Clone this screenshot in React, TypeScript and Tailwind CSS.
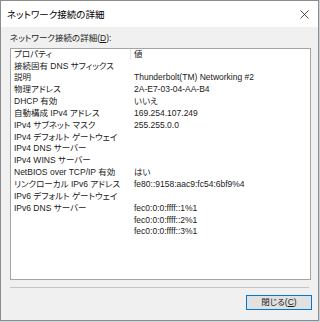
const rows: [string, string][] = [
  ['接続固有 DNS サフィックス', ''],
  ['説明', 'Thunderbolt(TM) Networking #2'],
  ['物理アドレス', '2A-E7-03-04-AA-B4'],
  ['DHCP 有効', 'いいえ'],
  ['自動構成 IPv4 アドレス', '169.254.107.249'],
  ['IPv4 サブネット マスク', '255.255.0.0'],
  ['IPv4 デフォルト ゲートウェイ', ''],
  ['IPv4 DNS サーバー', ''],
  ['IPv4 WINS サーバー', ''],
  ['NetBIOS over TCP/IP 有効', 'はい'],
  ['リンクローカル IPv6 アドレス', 'fe80::9158:aac9:fc54:6bf9%4'],
  ['IPv6 デフォルト ゲートウェイ', ''],
  ['IPv6 DNS サーバー', 'fec0:0:0:ffff::1%1'],
  ['', 'fec0:0:0:ffff::2%1'],
  ['', 'fec0:0:0:ffff::3%1'],
];

const font = "font-['Liberation_Sans','Noto_Sans_CJK_JP',sans-serif] [font-feature-settings:'palt']";

export default function App() {
  return (
    <div className={`w-[320px] h-[322px] bg-[#c9d3dc] ${font} text-[#1a1a1a]`}>
      <div className="w-[319px] h-[321px] border border-[#8c8c8c] bg-[#f0f0f0] flex flex-col">
        <div className="h-[26px] bg-white flex items-center justify-between pl-[6px] pr-[9px]">
          <span className="text-[9.5px] leading-none mt-[1px] text-black">ネットワーク接続の詳細</span>
          <svg width="9" height="9" viewBox="0 0 9 9" className="mt-[1px]">
            <path d="M0.5 0.5 L8.5 8.5 M8.5 0.5 L0.5 8.5" stroke="#222" strokeWidth="0.8" fill="none" />
          </svg>
        </div>
        <div className="flex-1 flex flex-col pl-[9px] pr-[7px] text-[8.5px]">
          <div className="mt-[6px] h-[10px] leading-[10px]">
            ネットワーク接続の詳細(<span className="underline">D</span>):
          </div>
          <div className="mt-[5px] w-[301px] h-[232px] border border-[#a5a5a5] bg-white flex flex-col">
            <div className="h-[11px] flex leading-[11px]">
              <div className="w-[120px] pl-[3px] border-r border-[#e5e5e5]">プロパティ</div>
              <div className="pl-[3px]">値</div>
            </div>
            {rows.map(([k, v], i) => (
              <div key={i} className="h-[11.85px] flex items-center whitespace-nowrap">
                <div className="w-[120px] pl-[3px]">{k}</div>
                <div className="pl-[3px]">{v}</div>
              </div>
            ))}
          </div>
          <div className="mt-[7px] h-px w-[299px] bg-[#c4c4c4]" />
          <button className="mt-[7px] ml-auto mr-[-1px] w-[66px] h-[15px] border border-[#0078d7] bg-[#e1e1e1] flex items-center justify-center text-[8.5px] leading-none">
            閉じる(<span className="underline">C</span>)
          </button>
        </div>
      </div>
    </div>
  );
}
